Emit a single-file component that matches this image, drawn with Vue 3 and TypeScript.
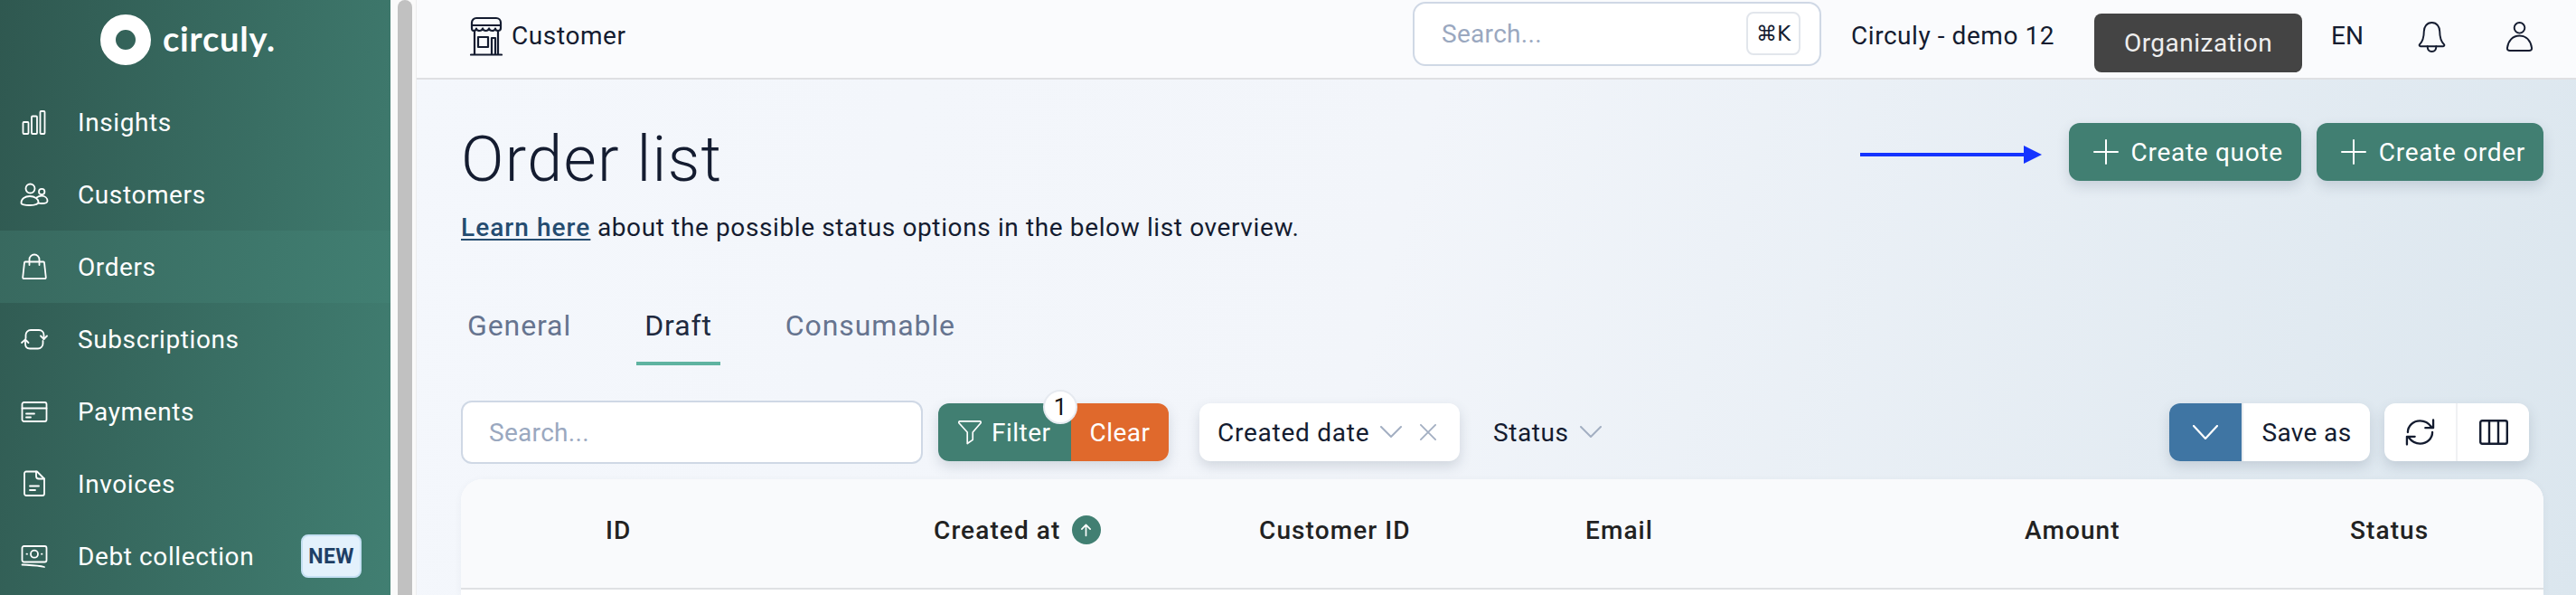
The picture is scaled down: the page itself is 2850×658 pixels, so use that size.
<script setup lang="ts">
interface NavItem {
  label: string
  paths: string[]
  badge?: string
}

const navItems: NavItem[] = [
  {
    label: 'Insights',
    paths: [
      'M4.5 16h4a1 1 0 0 1 1 1v11a1 1 0 0 1-1 1h-4a1 1 0 0 1-1-1V17a1 1 0 0 1 1-1z',
      'M14 9.5h4a1 1 0 0 1 1 1V28a1 1 0 0 1-1 1h-4a1 1 0 0 1-1-1V10.5a1 1 0 0 1 1-1z',
      'M23.5 4h3a1 1 0 0 1 1 1v23a1 1 0 0 1-1 1h-3a1 1 0 0 1-1-1V5a1 1 0 0 1 1-1z',
    ],
  },
  {
    label: 'Customers',
    paths: [
      'M6.5 9.5a5 5 0 1 0 10 0a5 5 0 1 0-10 0z',
      'M21 13a3.2 3.2 0 1 0 6.4 0a3.2 3.2 0 1 0-6.4 0z',
      'M1.5 25.5c0-4.5 4-7.5 9.5-7.5s9.5 3 9.5 6.5c0 2-4 3.5-9.5 3.5c-5.5 0-9.5-.8-9.5-2.5z',
      'M18.5 19.5c1.5-1.2 3.5-1.8 5.5-1.8c4 0 6.5 2.5 6.5 5.5c0 1.5-2.5 2.8-6.5 2.8c-1.2 0-2.3-.1-3.2-.3',
    ],
  },
  {
    label: 'Orders',
    paths: [
      'M6 10.5h20a1 1 0 0 1 1 .9l1.8 16.5a1.2 1.2 0 0 1-1.2 1.3H4.4a1.2 1.2 0 0 1-1.2-1.3L5 11.4a1 1 0 0 1 1-.9z',
      'M10.5 14V8a5.5 5.5 0 0 1 11 0v6',
    ],
  },
  {
    label: 'Subscriptions',
    paths: [
      'M6.5 15V11.5a5.5 5.5 0 0 1 5.5-5.5h9c3.5 0 5.5 2.5 5.5 5.5V16',
      'M23 12.5l3.5 3.5 3.5-3.5',
      'M25.5 18v3a5.5 5.5 0 0 1-5.5 5.5h-9c-3.5 0-5-2.5-5-5.5v-4.5',
      'M2 20l4-3.5 3.5 3.5',
    ],
  },
  {
    label: 'Payments',
    paths: [
      'M4.5 6h23a2 2 0 0 1 2 2v17a2 2 0 0 1-2 2h-23a2 2 0 0 1-2-2V8a2 2 0 0 1 2-2z',
      'M2.5 12.5h27',
      'M7 18.5h9',
      'M7 22.5h5',
    ],
  },
  {
    label: 'Invoices',
    paths: [
      'M7 2.5h12l8 8V27a2 2 0 0 1-2 2H7a2 2 0 0 1-2-2V4.5a2 2 0 0 1 2-2z',
      'M18 2.5v5a3 3 0 0 0 3 3h6',
      'M11 18.5h10',
      'M11 23h6',
    ],
  },
  {
    label: 'Debt collection',
    badge: 'NEW',
    paths: [
      'M4.5 5h23a2 2 0 0 1 2 2v13.5a2 2 0 0 1-2 2h-23a2 2 0 0 1-2-2V7a2 2 0 0 1 2-2z',
      'M12 13.7a4 4 0 1 0 8 0a4 4 0 1 0-8 0z',
      'M7.5 13.7h.5',
      'M24 13.7h.5',
      'M2.5 25.5c8 .5 17 .5 24.5 2.5',
    ],
  },
]
</script>

<template>
  <div class="app">
    <aside class="sidebar">
      <div class="logo">
        <span class="logo-mark"></span>
        <span class="logo-text">circuly.</span>
      </div>
      <nav class="nav">
        <a v-for="item in navItems" :key="item.label" class="nav-item" :class="{ active: item.label === 'Orders' }">
          <svg class="nav-icon" viewBox="0 0 32 32" fill="none" stroke="currentColor" stroke-width="1.8" stroke-linecap="round" stroke-linejoin="round">
            <path v-for="d in item.paths" :key="d" :d="d" />
          </svg>
          <span class="nav-label">{{ item.label }}</span>
          <span v-if="item.badge" class="nav-badge">{{ item.badge }}</span>
        </a>
      </nav>
    </aside>

    <div class="scrolltrack"><div class="scrollthumb"></div></div>

    <div class="content">
      <header class="topbar">
        <div class="crumb">
          <svg class="store" viewBox="0 0 36 44" fill="none" stroke="#141c30" stroke-width="2.2" stroke-linecap="round" stroke-linejoin="round">
            <path d="M7 2h22a5 5 0 0 1 5 5v6c0 2-1.5 3-3 3s-3-1-3-2.5c0 1.5-2 2.5-3.5 2.5s-3-1-3.5-2.5c-.5 1.5-2 2.5-3.5 2.5s-3-1-3.500-2.500c-.5 1.500-2 2.500-3.500 2.500s-3.500-1-3.500-2.500c0 1.500-1.500 2.500-3 2.500s-2-1-2-3V7a5 5 0 0 1 5-5z" />
            <path d="M2 10h32" />
            <path d="M5 17v25M31 17v25M1 42.5h34" />
            <path d="M9 23h11v11H9z" />
            <path d="M24 42V24h4v18" />
          </svg>
          <span>Customer</span>
        </div>
        <div class="topsearch">
          <span class="ph">Search...</span>
          <kbd class="kbd">⌘K</kbd>
        </div>
        <span class="org-name">Circuly - demo 12</span>
        <button class="org-btn">Organization</button>
        <span class="lang">EN</span>
        <svg class="bell" viewBox="0 0 32 36" fill="none" stroke="#141c30" stroke-width="2" stroke-linejoin="round" stroke-linecap="round">
          <path d="M16 2c-6 0-9 5-9 10c0 6-1 11-5 15c-.8 1 0 2 1 2h26c1 0 1.8-1 1-2c-4-4-5-9-5-15c0-5-3-10-9-10z" />
          <path d="M11 29c0 4 2 6 5 6s5-2 5-6" />
        </svg>
        <svg class="user" viewBox="0 0 32 36" fill="none" stroke="#141c30" stroke-width="2" stroke-linejoin="round">
          <circle cx="16" cy="8" r="6" />
          <path d="M16 17c-8 0-13 6-14 14c-.2 2 1 3 3 3h22c2 0 3.2-1 3-3c-1-8-6-14-14-14z" />
        </svg>
      </header>

      <main class="page">
        <div class="title-row">
          <div>
            <h1 class="title">Order list</h1>
            <p class="sub"><a class="learn">Learn here</a> about the possible status options in the below list overview.</p>
          </div>
          <div class="actions">
            <svg class="arrow" viewBox="0 0 201 20" fill="#1433ff">
              <rect x="0" y="8" width="184" height="4" />
              <path d="M181 0l20 10l-20 10z" />
            </svg>
            <button class="cta">
              <svg class="plus" viewBox="0 0 28 28" stroke="#fff" stroke-width="2" stroke-linecap="round"><path d="M14 1v26M1 14h26" /></svg>
              Create quote
            </button>
            <button class="cta">
              <svg class="plus" viewBox="0 0 28 28" stroke="#fff" stroke-width="2" stroke-linecap="round"><path d="M14 1v26M1 14h26" /></svg>
              Create order
            </button>
          </div>
        </div>

        <div class="tabs">
          <a class="tab">General</a>
          <a class="tab on">Draft</a>
          <a class="tab">Consumable</a>
        </div>

        <div class="toolbar">
          <div class="search"><span class="ph">Search...</span></div>
          <div class="filter-group">
            <button class="filter">
              <svg class="funnel" viewBox="0 0 28 30" fill="none" stroke="#fff" stroke-width="1.8" stroke-linejoin="round">
                <path d="M2 2h24c1 0 1.5 1 1 2L17.500 15v9l-6.500 4.500V15L1 4c-.5-1 0-2 1-2z" />
              </svg>
              Filter
            </button>
            <button class="clear">Clear</button>
            <span class="count">1</span>
          </div>
          <div class="pill">
            Created date
            <svg class="chev" viewBox="0 0 24 14" fill="none" stroke="#a3afc2" stroke-width="2" stroke-linecap="round" stroke-linejoin="round"><path d="M1 1l11 11L23 1" /></svg>
            <svg class="x" viewBox="0 0 20 20" fill="none" stroke="#a3afc2" stroke-width="2" stroke-linecap="round"><path d="M1 1l18 18M19 1L1 19" /></svg>
          </div>
          <div class="plain">
            Status
            <svg class="chev" viewBox="0 0 24 14" fill="none" stroke="#a3afc2" stroke-width="2" stroke-linecap="round" stroke-linejoin="round"><path d="M1 1l11 11L23 1" /></svg>
          </div>
          <div class="spacer"></div>
          <div class="save">
            <span class="save-chev">
              <svg class="chev-w" viewBox="0 0 28 16" fill="none" stroke="#fff" stroke-width="2.2" stroke-linecap="round" stroke-linejoin="round"><path d="M1 1l13 14L27 1" /></svg>
            </span>
            <span class="save-txt">Save as</span>
          </div>
          <div class="tools">
            <span class="tool">
              <svg viewBox="0 0 34 30" fill="none" stroke="#141c30" stroke-width="2.4" stroke-linecap="round" stroke-linejoin="round" class="tool-ic">
                <path d="M3 15C3 8 9 2 17 2c5 0 10 3 13 7" />
                <path d="M32 1v9H23" />
                <path d="M31 15c0 7-6 13-14 13c-5 0-10-3-13-7" />
                <path d="M2 29v-9h9" />
              </svg>
            </span>
            <span class="tool bordered">
              <svg viewBox="0 0 32 28" fill="none" stroke="#141c30" stroke-width="2.4" stroke-linejoin="round" class="tool-ic2">
                <rect x="1.2" y="1.2" width="29.6" height="25.6" rx="2" />
                <path d="M11 1v26M21 1v26" />
              </svg>
            </span>
          </div>
        </div>

        <section class="table">
          <div class="thead">
            <span class="th">ID</span>
            <span class="th">
              Created at
              <span class="sort">
                <svg viewBox="0 0 14 16" fill="none" stroke="#fff" stroke-width="1.8" stroke-linecap="round" stroke-linejoin="round"><path d="M7 15V2M2 7l5-5 5 5" /></svg>
              </span>
            </span>
            <span class="th">Customer ID</span>
            <span class="th">Email</span>
            <span class="th">Amount</span>
            <span class="th">Status</span>
          </div>
          <div class="tbody"></div>
        </section>
      </main>
    </div>
  </div>
</template>

<style scoped>
.app {
  display: flex;
  width: 2850px;
  height: 658px;
  overflow: hidden;
  font-family: Roboto, "Liberation Sans", sans-serif;
  color: #141c30;
}

/* Sidebar */
.sidebar {
  width: 432px;
  flex: none;
  background: linear-gradient(100deg, #2f5850 0%, #417f72 100%);
  color: #fff;
  display: flex;
  flex-direction: column;
}
.logo {
  height: 96px;
  display: flex;
  align-items: flex-start;
  padding: 16px 0 0 111px;
  box-sizing: border-box;
  gap: 13px;
}
.logo-mark {
  width: 56px;
  height: 56px;
  box-sizing: border-box;
  border: 17px solid #fff;
  border-radius: 50%;
  flex: none;
}
.logo-text {
  font-family: Lato, sans-serif;
  font-weight: 700;
  font-size: 38px;
  letter-spacing: 0.8px;
  line-height: 52px;
}
.nav {
  display: flex;
  flex-direction: column;
  margin-top: -1px;
}
.nav-item {
  height: 80px;
  display: flex;
  align-items: center;
  padding: 0 32px 0 22px;
  font-size: 28px;
  letter-spacing: 0.6px;
}
.nav-item.active {
  background: linear-gradient(100deg, #38695f, #417f72);
}
.nav-icon {
  width: 32px;
  height: 32px;
  flex: none;
  margin-right: 32px;
}
.nav-label {
  flex: 1;
}
.nav-badge {
  width: 67px;
  height: 48px;
  box-sizing: border-box;
  display: flex;
  align-items: center;
  justify-content: center;
  background: #e3f1fc;
  border: 2px solid #c5e0f3;
  border-radius: 8px;
  color: #1e3f66;
  font-size: 23px;
  font-weight: 700;
  letter-spacing: 0.4px;
}

/* Scrollbar */
.scrolltrack {
  width: 29px;
  flex: none;
  background: #fafafa;
  padding-left: 8px;
  box-sizing: border-box;
  border-right: 1px solid #ededed;
}
.scrollthumb {
  width: 16px;
  height: 100%;
  background: #c1c1c1;
  border-radius: 8px 8px 0 0;
}

/* Main */
.content {
  flex: 1;
  min-width: 0;
  display: flex;
  flex-direction: column;
  background: linear-gradient(105deg, #f4f7fc 0%, #f2f5fa 45%, #dbe6ee 100%);
}
.topbar {
  height: 88px;
  flex: none;
  box-sizing: border-box;
  display: flex;
  align-items: center;
  background: #fafbfd;
  border-bottom: 2px solid #dfe0e3;
  padding: 0 48px 0 59px;
  font-size: 28px;
}
.crumb {
  display: flex;
  align-items: center;
  gap: 10px;
  margin-top: -7px;
  width: 1043px;
  flex: none;
  letter-spacing: 0.6px;
}
.store {
  width: 36px;
  height: 44px;
  flex: none;
}
.topsearch {
  width: 452px;
  height: 71px;
  box-sizing: border-box;
  flex: none;
  margin-top: -12px;
  display: flex;
  align-items: center;
  justify-content: space-between;
  padding: 0 21px 0 30px;
  background: #fff;
  border: 2px solid #cfd8e5;
  border-radius: 14px;
}
.ph {
  color: #9aa8bf;
  font-size: 28px;
  letter-spacing: 0.3px;
}
.kbd {
  width: 60px;
  height: 48px;
  box-sizing: border-box;
  display: flex;
  align-items: center;
  justify-content: center;
  background: #fff;
  border: 2px solid #e2e6ec;
  border-radius: 8px;
  font-family: "DejaVu Sans", Roboto, sans-serif;
  font-size: 23px;
}
.org-name {
  margin-left: 33px;
  margin-top: -8px;
  letter-spacing: 0.55px;
  white-space: nowrap;
  flex: none;
  width: 269px;
}
.org-btn {
  width: 230px;
  height: 65px;
  flex: none;
  margin-top: 8px;
  border: 0;
  border-radius: 8px;
  background: #444;
  color: #eee;
  font: inherit;
  letter-spacing: 0.5px;
}
.lang {
  margin-left: 32px;
  margin-top: -8px;
  width: 96px;
  flex: none;
}
.bell {
  width: 31px;
  height: 35px;
  flex: none;
  margin-top: -6px;
}
.user {
  width: 31px;
  height: 35px;
  margin-left: 66px;
  flex: none;
  margin-top: -6px;
}

.page {
  padding: 0 36px 0 49px;
  flex: 1;
  min-height: 0;
}
.title-row {
  display: flex;
  justify-content: space-between;
  align-items: flex-start;
}
.title {
  margin: 47px 0 0;
  font-size: 70px;
  line-height: 82px;
  font-weight: 300;
  letter-spacing: 1.4px;
}
.sub {
  margin: 17px 0 0;
  font-size: 28px;
  line-height: 36px;
  letter-spacing: 0.62px;
}
.learn {
  color: #254c70;
  font-weight: 500;
  letter-spacing: 1.05px;
  text-decoration: underline;
  text-underline-offset: 3px;
}
.actions {
  display: flex;
  align-items: center;
  gap: 17px;
  margin-top: 48px;
}
.arrow {
  width: 201px;
  height: 20px;
  flex: none;
  margin-right: 13px;
  margin-top: 6px;
}
.cta {
  height: 64px;
  box-sizing: border-box;
  border: 0;
  border-radius: 12px;
  background: #417f72;
  color: #fff;
  font: inherit;
  font-size: 28px;
  letter-spacing: 0.7px;
  display: flex;
  align-items: center;
  gap: 14px;
  padding: 0 20px 0 27px;
  white-space: nowrap;
  box-shadow: 0 6px 14px rgba(60, 80, 100, 0.18);
}
.plus {
  width: 28px;
  height: 28px;
  flex: none;
}
.tabs {
  display: flex;
  margin: 64px 0 0 -2px;
  height: 70px;
  align-items: flex-start;
  font-size: 32px;
}
.tab {
  padding: 0 9px;
  height: 66px;
  line-height: 52px;
  margin-right: 63px;
  color: #66748f;
  letter-spacing: 0.9px;
}
.tab.on {
  color: #1f2a40;
  border-bottom: 4px solid #5fb3a1;
}
.toolbar {
  display: flex;
  align-items: center;
  margin-top: 39px;
  height: 70px;
}
.search {
  width: 511px;
  height: 70px;
  box-sizing: border-box;
  background: #fff;
  border: 2px solid #cfd8e5;
  border-radius: 12px;
  display: flex;
  align-items: center;
  padding-left: 29px;
}
.filter-group {
  position: relative;
  display: flex;
  margin-left: 17px;
  height: 64px;
  border-radius: 12px;
  box-shadow: 0 6px 14px rgba(60, 80, 100, 0.18);
}
.filter,
.clear {
  border: 0;
  color: #fff;
  font: inherit;
  font-size: 28px;
  letter-spacing: 0.5px;
  display: flex;
  align-items: center;
}
.filter {
  width: 147px;
  background: #417f72;
  border-radius: 12px 0 0 12px;
  padding: 0 0 0 22px;
  gap: 11px;
}
.clear {
  width: 108px;
  background: #e0692c;
  border-radius: 0 12px 12px 0;
  justify-content: center;
}
.funnel {
  width: 26px;
  height: 28px;
  flex: none;
}
.count {
  position: absolute;
  left: 116px;
  top: -15px;
  width: 38px;
  height: 38px;
  box-sizing: border-box;
  display: flex;
  align-items: center;
  justify-content: center;
  background: #fff;
  border: 2px solid #e6eaf0;
  border-radius: 50%;
  color: #141414;
  font-size: 26px;
}
.pill {
  margin-left: 34px;
  width: 288px;
  height: 64px;
  box-sizing: border-box;
  padding-left: 20px;
  background: #fff;
  border-radius: 12px;
  display: flex;
  align-items: center;
  font-size: 28px;
  letter-spacing: 0.75px;
  white-space: nowrap;
  box-shadow: 0 6px 14px rgba(60, 80, 100, 0.18);
}
.plain {
  margin-left: 37px;
  display: flex;
  align-items: center;
  font-size: 28px;
  letter-spacing: 0.6px;
}
.chev {
  width: 24px;
  height: 14px;
  margin-left: 12px;
  flex: none;
}
.x {
  width: 18px;
  height: 18px;
  margin-left: 20px;
  flex: none;
}
.spacer {
  flex: 1;
}
.save {
  display: flex;
  height: 64px;
  width: 222px;
  border-radius: 12px;
  box-shadow: 0 6px 14px rgba(60, 80, 100, 0.18);
  background: #fff;
}
.save-chev {
  width: 80px;
  background: #3f75a3;
  display: flex;
  align-items: center;
  justify-content: center;
  flex: none;
  border-radius: 12px 0 0 12px;
  border-right: 2px solid #e9ecef;
}
.chev-w {
  width: 28px;
  height: 16px;
}
.save-txt {
  flex: 1;
  display: flex;
  align-items: center;
  justify-content: center;
  font-size: 28px;
  letter-spacing: 0.35px;
}
.tools {
  display: flex;
  width: 160px;
  height: 64px;
  margin: 0 16px 0 16px;
  background: #fff;
  border-radius: 12px;
  box-shadow: 0 6px 14px rgba(60, 80, 100, 0.18);
}
.tool {
  flex: 1;
  display: flex;
  align-items: center;
  justify-content: center;
}
.tool.bordered {
  border-left: 2px solid #f0f1f3;
}
.tool-ic {
  width: 33px;
  height: 30px;
}
.tool-ic2 {
  width: 32px;
  height: 28px;
}
.table {
  margin-top: 17px;
  border-radius: 24px 24px 0 0;
  background: #fff;
  height: 128px;
  overflow: hidden;
  box-shadow: 0 2px 8px rgba(60, 80, 100, 0.06);
}
.thead {
  height: 122px;
  box-sizing: border-box;
  background: #f9fafc;
  border-bottom: 2px solid #dfe1e4;
  display: grid;
  grid-template-columns: 363px 360px 361px 486px 360px 1fr;
  padding-left: 160px;
  align-items: center;
  color: #222;
  font-size: 28px;
  font-weight: 500;
  letter-spacing: 1.1px;
}
.th {
  display: flex;
  align-items: center;
  white-space: nowrap;
  margin-top: -8px;
}
.sort {
  width: 32px;
  height: 32px;
  border-radius: 50%;
  background: #417f72;
  display: flex;
  align-items: center;
  justify-content: center;
  margin-left: 12px;
}
.sort svg {
  width: 13px;
  height: 16px;
}
.tbody {
  height: 6px;
  background: #fff;
}
</style>

<style>
html,
body {
  margin: 0;
  overflow: hidden;
}
</style>
